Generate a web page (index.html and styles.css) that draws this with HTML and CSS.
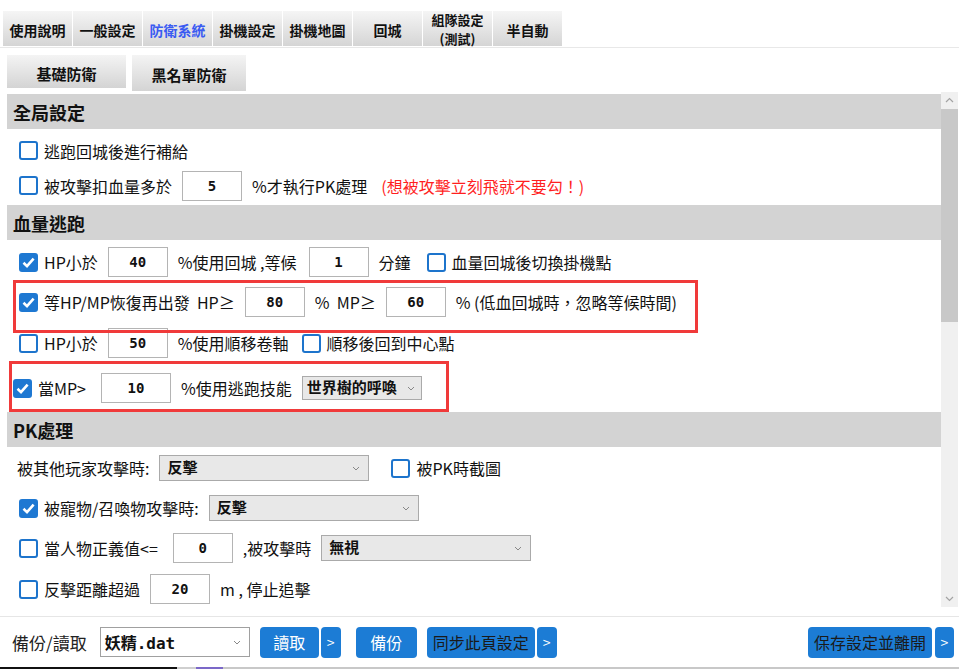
FILE: index.html
```html
<!DOCTYPE html>
<html lang="zh-Hant">
<head>
  <meta charset="UTF-8">
  <title>防衛系統</title>
  <link rel="stylesheet" href="styles.css">
</head>
<body>

  <!-- Top tabs -->
  <div class="tabs">
    <div class="tab">使用說明</div>
    <div class="tab">一般設定</div>
    <div class="tab active">防衛系統</div>
    <div class="tab">掛機設定</div>
    <div class="tab">掛機地圖</div>
    <div class="tab">回城</div>
    <div class="tab two-line">組隊設定<br>(測試)</div>
    <div class="tab">半自動</div>
  </div>

  <div class="subtabs">
    <div class="subtab">基礎防衛</div>
    <div class="subtab tall">黑名單防衛</div>
  </div>

  <!-- Settings panel -->
  <div class="panel">
    <div class="content">

      <div class="section-title">全局設定</div>
      <div class="section s1">
        <div class="row">
          <label class="chk"><span class="cb"></span>逃跑回城後進行補給</label>
        </div>
        <div class="row">
          <label class="chk"><span class="cb"></span>被攻擊扣血量多於</label>
          <input class="num" value="5" readonly>
          <span>%才執行PK處理</span>
          <span class="warn">(想被攻擊立刻飛就不要勾！)</span>
        </div>
      </div>

      <div class="section-title">血量逃跑</div>
      <div class="section s2">
        <div class="row">
          <label class="chk"><span class="cb on"><svg viewBox="0 0 19 19"><path d="M4.5 9.8 L8 13.2 L14.6 5.6"/></svg></span>HP小於</label>
          <input class="num" value="40" readonly>
          <span class="spaced">%使用回城 ,等候</span>
          <input class="num" value="1" readonly>
          <span>分鐘</span>
          <label class="chk push"><span class="cb"></span>血量回城後切換掛機點</label>
        </div>
        <div class="row">
          <label class="chk"><span class="cb on"><svg viewBox="0 0 19 19"><path d="M4.5 9.8 L8 13.2 L14.6 5.6"/></svg></span>等HP/MP恢復再出發&nbsp; HP≥</label>
          <input class="num" value="80" readonly>
          <span>%&nbsp; MP≥</span>
          <input class="num" value="60" readonly>
          <span>% (低血回城時，忽略等候時間)</span>
        </div>
        <div class="row r42">
          <label class="chk"><span class="cb"></span>HP小於</label>
          <input class="num" value="50" readonly>
          <span>%使用順移卷軸</span>
          <label class="chk push-sm"><span class="cb"></span>順移後回到中心點</label>
        </div>
        <div class="row r48 shift">
          <label class="chk wider"><span class="cb on"><svg viewBox="0 0 19 19"><path d="M4.5 9.8 L8 13.2 L14.6 5.6"/></svg></span>當MP&gt;</label>
          <input class="num wide" value="10" readonly>
          <span>%使用逃跑技能</span>
          <div class="sel small"><span class="sel-text">世界樹的呼喚</span><svg class="chev" viewBox="0 0 8 5"><path d="M1 1 L4 4 L7 1"/></svg></div>
        </div>
      </div>

      <div class="section-title">PK處理</div>
      <div class="section s3">
        <div class="row plain">
          <span>被其他玩家攻擊時:</span>
          <div class="sel"><span class="sel-text">反擊</span><svg class="chev" viewBox="0 0 8 5"><path d="M1 1 L4 4 L7 1"/></svg></div>
          <label class="chk push-lg"><span class="cb"></span>被PK時截圖</label>
        </div>
        <div class="row">
          <label class="chk"><span class="cb on"><svg viewBox="0 0 19 19"><path d="M4.5 9.8 L8 13.2 L14.6 5.6"/></svg></span>被寵物/召喚物攻擊時:</label>
          <div class="sel"><span class="sel-text">反擊</span><svg class="chev" viewBox="0 0 8 5"><path d="M1 1 L4 4 L7 1"/></svg></div>
        </div>
        <div class="row">
          <label class="chk wider"><span class="cb"></span>當人物正義值&lt;=</label>
          <input class="num" value="0" readonly>
          <span>,被攻擊時</span>
          <div class="sel"><span class="sel-text">無視</span><svg class="chev" viewBox="0 0 8 5"><path d="M1 1 L4 4 L7 1"/></svg></div>
        </div>
        <div class="row r42">
          <label class="chk"><span class="cb"></span>反擊距離超過</label>
          <input class="num" value="20" readonly>
          <span>m , 停止追擊</span>
        </div>
      </div>

    </div>

    <div class="scrollbar">
      <div class="sb-btn"><svg viewBox="0 0 17 17"><path d="M5 10 L8.5 6.5 L12 10"/></svg></div>
      <div class="sb-thumb"></div>
      <div class="sb-track"></div>
      <div class="sb-btn"><svg viewBox="0 0 17 17"><path d="M5 7 L8.5 10.5 L12 7"/></svg></div>
    </div>

    <!-- red highlight boxes drawn over the rows -->
    <div class="mark mark-one"></div>
    <div class="mark mark-two"></div>
  </div>

  <!-- Bottom bar -->
  <div class="footer">
    <span class="backup-label">備份/讀取</span>
    <div class="sel file"><span class="sel-text">妖精<span class="mono">.dat</span></span><svg class="chev" viewBox="0 0 8 5"><path d="M1 1 L4 4 L7 1"/></svg></div>
    <div class="btn load">讀取</div>
    <div class="btn arrow">&gt;</div>
    <div class="btn backup">備份</div>
    <div class="btn dark sync">同步此頁設定</div>
    <div class="btn arrow">&gt;</div>
    <div class="spacer"></div>
    <div class="btn dark save">保存設定並離開</div>
    <div class="btn arrow last">&gt;</div>
  </div>
  <div class="taskbar"></div>

</body>
</html>
```

FILE: styles.css
```css
body {
  margin: 0;
  width: 959px;
  height: 669px;
  overflow: hidden;
  font-family: "Noto Sans CJK TC", "Noto Sans", sans-serif;
  color: #111;
  background-color: #fff;
}

/* tabs */
.tabs {
  display: flex;
  gap: 1px;
  padding: 11px 0 1px 3px;
  border-bottom: 1px solid #e8e8e8;
}

.tab {
  width: 69px;
  height: 35px;
  box-sizing: border-box;
  padding-top: 3px;
  display: flex;
  align-items: center;
  justify-content: center;
  text-align: center;
  font-size: 14px;
  font-weight: bold;
  line-height: 18px;
  background: linear-gradient(#f5f5f5, #d5d5d5);
}

.tab.active {
  color: #3a5bf2;
}

.tab.two-line {
  padding-top: 1px;
  font-size: 13px;
  line-height: 19px;
}

.subtabs {
  display: flex;
  align-items: flex-start;
  gap: 6px;
  margin-top: 7px;
  padding-left: 7px;
}

.subtab {
  width: 119px;
  height: 33px;
  box-sizing: border-box;
  padding-top: 3px;
  display: flex;
  align-items: center;
  justify-content: center;
  font-size: 15px;
  font-weight: bold;
  background: linear-gradient(#f4f4f4, #d4d4d4);
}

.subtab.tall {
  width: 114px;
  height: 36px;
}

/* panel */
.panel {
  position: relative;
  display: flex;
  height: 515px;
  margin: 1px 1px 0 7px;
}

.content {
  width: 934px;
  overflow: hidden;
  padding-top: 2px;
  box-sizing: border-box;
}

.section-title {
  height: 35px;
  padding-left: 6px;
  display: flex;
  align-items: center;
  font-size: 18px;
  font-weight: bold;
  background-color: #d3d3d3;
}

.s1 {
  padding: 4px 0 2px;
}

.s1 .row {
  height: 35px;
}

.s2 {
  padding-top: 2px;
}

.s3 {
  padding-top: 1px;
}

.row {
  height: 40px;
  display: flex;
  align-items: center;
  gap: 10px;
  padding-left: 12px;
  font-size: 16px;
  white-space: nowrap;
}

.row.r42 {
  height: 42px;
}

.row.r48 {
  height: 48px;
}

.row.shift {
  padding-left: 6px;
}

.row.plain {
  padding-left: 10px;
}

.spaced {
  margin-right: 2px;
}

.chk {
  display: flex;
  align-items: center;
  gap: 6px;
}

.chk.wider {
  margin-right: 5px;
}

.chk.push {
  margin-left: 6px;
}

.chk.push-sm {
  margin-left: 3px;
}

.chk.push-lg {
  margin-left: 12px;
}

.cb {
  width: 19px;
  height: 19px;
  box-sizing: border-box;
  border: 2px solid #1d74cc;
  border-radius: 3px;
  background-color: #fff;
}

.cb.on {
  background-color: #1e78d2;
  border-color: #1e78d2;
}

.cb svg {
  display: block;
  width: 19px;
  height: 19px;
  margin: -2px;
  fill: none;
  stroke: #fff;
  stroke-width: 2.6;
}

.num {
  width: 60px;
  height: 30px;
  box-sizing: border-box;
  padding: 0;
  border: 1px solid #b4b4b4;
  text-align: center;
  font: bold 14px "DejaVu Sans Mono", monospace;
  color: #111;
  outline: none;
}

.num.wide {
  width: 70px;
}

.warn {
  color: #ff1f1f;
  margin-left: 4px;
}

.sel {
  width: 210px;
  height: 26px;
  box-sizing: border-box;
  padding: 0 8px 0 7px;
  display: flex;
  align-items: center;
  justify-content: space-between;
  border: 1px solid #aaa;
  background-color: #e8e8e8;
  font-size: 15px;
  font-weight: bold;
}

.sel.small {
  width: 120px;
  height: 24px;
  padding: 0 6px 0 4px;
}

.sel-text {
  margin-top: -3px;
}

.chev {
  width: 8px;
  height: 5px;
  fill: none;
  stroke: #888;
  stroke-width: 1;
}

/* scrollbar */
.scrollbar {
  width: 17px;
  display: flex;
  flex-direction: column;
  background-color: #f0f0f0;
}

.sb-btn {
  height: 17px;
}

.sb-btn svg {
  display: block;
  width: 17px;
  height: 17px;
  fill: none;
  stroke: #a3a3a3;
  stroke-width: 1.2;
}

.sb-thumb {
  height: 213px;
  background-color: #c8c8c8;
}

.sb-track {
  flex: 1;
}

.mark {
  position: absolute;
  border: 3px solid #f03a3a;
  box-sizing: border-box;
}

.mark-one {
  left: 6px;
  top: 188px;
  width: 685px;
  height: 53px;
}

.mark-two {
  left: 2px;
  top: 269px;
  width: 440px;
  height: 51px;
}

/* footer */
.footer {
  height: 50px;
  margin-top: 9px;
  padding: 0 5px 0 12px;
  display: flex;
  align-items: center;
  border-top: 1px solid #e6e6e6;
}

.backup-label {
  font-size: 17px;
  color: #222;
  margin-right: 13px;
}

.sel.file {
  width: 150px;
  height: 30px;
  padding: 0 8px 0 4px;
  background-color: #fff;
  border-color: #a0a0a0;
  font-size: 16px;
}

.sel.file .sel-text {
  margin-top: 0;
}

.mono {
  font-family: "DejaVu Sans Mono", monospace;
}

.btn {
  height: 31px;
  display: flex;
  align-items: center;
  justify-content: center;
  border-radius: 4px;
  background-color: #1c7cd5;
  color: #fff;
  font-size: 16px;
}

.btn.dark {
  color: #1a1a1a;
}

.btn.load {
  width: 59px;
  margin-left: 10px;
}

.btn.arrow {
  width: 20px;
  margin-left: 2px;
  font-size: 14px;
}

.btn.backup {
  width: 61px;
  margin-left: 15px;
}

.btn.sync {
  width: 108px;
  margin-left: 10px;
}

.btn.save {
  width: 124px;
}

.btn.arrow.last {
  width: 19px;
  margin-left: 3px;
}

.spacer {
  flex: 1;
}

.taskbar {
  height: 2px;
  background: linear-gradient(to right, #111 0 177px, #cfcfcf 177px 196px, #7b68c8 196px 223px, #c8c8c8 223px);
}
```
